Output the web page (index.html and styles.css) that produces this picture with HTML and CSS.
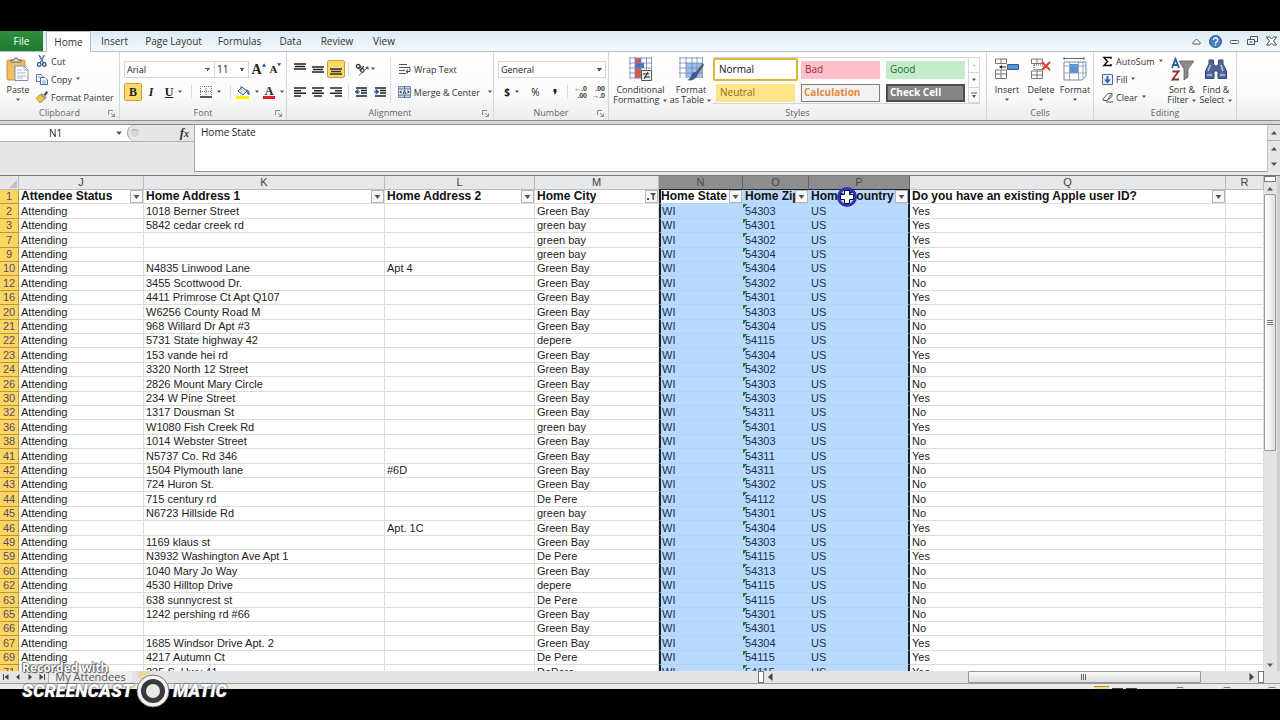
FILE: index.html
```html
<!DOCTYPE html>
<html lang="en">
<head>
<meta charset="utf-8">
<title>My Attendees</title>
<link rel="stylesheet" href="styles.css">
</head>
<body>
<svg class="defs" aria-hidden="true">
  <symbol id="caret" viewBox="0 0 6 4"><path d="M1 .5h4L3 3z" fill="#555"/></symbol>
  <symbol id="launch" viewBox="0 0 7 7"><path d="M.5 5V.5H5M3 3l3 3M6.500 3.500v3h-3" fill="none" stroke="#8b8b8b"/></symbol>
  <symbol id="al" viewBox="0 0 12 10"><path d="M0 1h12M0 3.700h7M0 6.300h12M0 9h7" stroke="#222" stroke-width="1.400"/></symbol>
  <symbol id="ac" viewBox="0 0 12 10"><path d="M0 1h12M2 3.700h8M0 6.300h12M2 9h8" stroke="#222" stroke-width="1.400"/></symbol>
  <symbol id="ar" viewBox="0 0 12 10"><path d="M0 1h12M5 3.700h7M0 6.300h12M5 9h7" stroke="#222" stroke-width="1.400"/></symbol>
  <symbol id="vt" viewBox="0 0 12 12"><path d="M0 1h12M1 3.500h10M0 6h12" stroke="#222" stroke-width="1.400"/></symbol>
  <symbol id="vm" viewBox="0 0 12 12"><path d="M0 4h12M1 6.500h10M0 9h12" stroke="#222" stroke-width="1.400"/></symbol>
  <symbol id="vb" viewBox="0 0 12 12"><path d="M0 6h12M1 8.500h10M0 11h12" stroke="#333" stroke-width="1.400"/></symbol>
  <symbol id="up" viewBox="0 0 8 5"><path d="M1 4.500h6L4 1z" fill="#555"/></symbol>
  <symbol id="down" viewBox="0 0 8 5"><path d="M1 .5h6L4 4z" fill="#555"/></symbol>
</svg>

<div class="window">
  <nav class="tabs" aria-label="Ribbon tabs">
    <button class="tab file">File</button>
    <button class="tab active">Home</button>
    <button class="tab t-insert">Insert</button>
    <button class="tab t-page">Page Layout</button>
    <button class="tab t-form">Formulas</button>
    <button class="tab t-data">Data</button>
    <button class="tab t-rev">Review</button>
    <button class="tab t-view">View</button>
    <div class="win-controls">
      <button aria-label="Minimize ribbon"><svg width="9" height="9" viewBox="0 0 9 9"><path d="M1 5.500 4.500 2 8 5.500v1.500H1z" fill="#fff" stroke="#555"/></svg></button>
      <button aria-label="Help"><svg width="13" height="13" viewBox="0 0 13 13"><circle cx="6.500" cy="6.500" r="6" fill="#4a7fc4" stroke="#2a5591"/><path d="M4.300 5a2.200 2.200 0 1 1 3.300 1.900c-.8.5-1.100.7-1.100 1.500M6.500 9.600v1.200" fill="none" stroke="#fff" stroke-width="1.300"/></svg></button>
      <button aria-label="Minimize"><svg width="9" height="9" viewBox="0 0 9 9"><rect x=".5" y="3.500" width="8" height="3" rx="1" fill="#fff" stroke="#555"/></svg></button>
      <button aria-label="Restore"><svg width="11" height="10" viewBox="0 0 11 10"><path d="M3.500 3V.5h7v5H8M.5 3.500h7v5h-7zM2.500 6h3" fill="none" stroke="#555"/></svg></button>
      <button aria-label="Close"><svg width="11" height="10" viewBox="0 0 11 10"><path d="M.5 1h3l2 2 2-2h3l-3 4 3 4h-3l-2-2-2 2h-3l3-4z" fill="#fff" stroke="#444"/></svg></button>
    </div>
  </nav>

  <div class="ribbon">
    <section class="group g-clip">
      <div class="body">
        <button class="big paste"><svg width="24" height="24" viewBox="0 0 24 24"><rect x="1" y="3" width="18" height="20" rx="1.500" fill="#eebf63" stroke="#c8923b"/><path d="M5 5V3h3q0-2 2-2t2 2h3v2z" fill="#ddd" stroke="#666"/><path d="M9 9h9l4 4v10.500H9z" fill="#fff" stroke="#7b8db0"/><path d="M18 9v4h4M11 13h5M11 16h9M11 19h9M11 21h6" fill="none" stroke="#9fb0cc"/></svg><span>Paste</span><svg class="caret"><use href="#caret"/></svg></button>
        <div class="stack">
          <button class="row"><svg width="12" height="12" viewBox="0 0 12 12"><path d="M3 0 7.500 8M8.500 0 4 8" stroke="#4a6fa8" stroke-width="1.400"/><circle cx="3.200" cy="9.500" r="1.800" fill="none" stroke="#24508f" stroke-width="1.300"/><circle cx="8.300" cy="9.500" r="1.800" fill="none" stroke="#24508f" stroke-width="1.300"/></svg>Cut</button>
          <button class="row"><svg width="12" height="12" viewBox="0 0 12 12"><path d="M.5 1.500H5L7 3.500v5H.5z" fill="#f4f7fc" stroke="#5977a8"/><path d="M4.500 4.500H9L11.500 7v4.500h-7z" fill="#fff" stroke="#4468a3"/><path d="M6 8h4M6 10h4M2 4h2" stroke="#6f9ad6"/></svg>Copy <svg class="caret"><use href="#caret"/></svg></button>
          <button class="row"><svg width="12" height="12" viewBox="0 0 12 12"><path d="m8 3 2.500-3L12 1.500 9.500 5z" fill="#444"/><path d="M5 3h2l3 3-.5 1.500z" fill="#c0c7d6" stroke="#555" stroke-width=".6"/><path d="m4.500 3.500 4.500 4.500-5 4-4-5z" fill="#f1c54b" stroke="#9b7a22" stroke-width=".7"/></svg>Format Painter</button>
        </div>
      </div>
      <div class="label">Clipboard<svg class="launch"><use href="#launch"/></svg></div>
    </section>

    <section class="group g-font">
      <div class="body lines">
        <div class="line">
          <select class="sel s-font" aria-label="Font"><option>Arial</option></select>
          <select class="sel s-size" aria-label="Font size"><option>11</option></select>
          <button class="ico w20" aria-label="Grow font"><span class="grow">A</span><svg class="mini" viewBox="0 0 6 4"><path d="M0 4h5L2.500 0z" fill="#24508f"/></svg></button>
          <button class="ico w14" aria-label="Shrink font"><span class="shrink">A</span><svg class="mini" viewBox="0 0 6 4"><path d="M0 0h5L2.500 3.500z" fill="#24508f"/></svg></button>
        </div>
        <div class="line">
          <button class="ico w18 on"><b class="serif">B</b></button>
          <button class="ico w18"><i class="serif">I</i></button>
          <button class="ico w28"><u class="serif">U</u><svg class="caret c-gap"><use href="#caret"/></svg></button>
          <span class="vsep"></span>
          <button class="ico w32" aria-label="Borders"><svg width="12" height="12" viewBox="0 0 12 12"><path d="M.5 0v10M6 0v10M11.500 0v10M0 .5h12M0 5.500h12" stroke="#777" stroke-dasharray="1 1"/><path d="M0 11h12" stroke="#222" stroke-width="1.500"/></svg><svg class="caret c-gap"><use href="#caret"/></svg></button>
          <span class="vsep"></span>
          <button class="ico w28" aria-label="Fill colour"><svg width="14" height="13" viewBox="0 0 14 13"><path d="m2 5 4-4 5 4-4 4z" fill="#dce6f4" stroke="#555"/><path d="M5 4V0M10 4q4 0 3 5-2-1-2-4" fill="#4a77b8" stroke="#4a77b8"/><path d="M0 10h13v3H0z" fill="#fff200"/></svg><svg class="caret c-gap"><use href="#caret"/></svg></button>
          <button class="ico w24" aria-label="Font colour"><span class="fc">A</span><svg class="caret c-gap"><use href="#caret"/></svg></button>
        </div>
      </div>
      <div class="label">Font<svg class="launch"><use href="#launch"/></svg></div>
    </section>

    <section class="group g-align">
      <div class="body lines">
        <div class="line">
          <button class="ico w18" aria-label="Top align"><svg width="12" height="12"><use href="#vt"/></svg></button>
          <button class="ico w18" aria-label="Middle align"><svg width="12" height="12"><use href="#vm"/></svg></button>
          <button class="ico w18 on" aria-label="Bottom align"><svg width="12" height="12"><use href="#vb"/></svg></button>
          <span class="vsep"></span>
          <button class="ico w38 orient" aria-label="Orientation"><svg width="14" height="13" viewBox="0 0 14 13"><g transform="rotate(45 5 5)" fill="none" stroke="#333" stroke-width="1.200"><circle cx="2.500" cy="5" r="1.800"/><path d="M4.500 3v4M6.500 1v6"/><circle cx="8.300" cy="5" r="1.800"/></g><path d="M4 12.500 12 5" stroke="#666"/><path d="M13.500 3.500v3.500l-3.500-3z" fill="#555"/></svg><svg class="caret"><use href="#caret"/></svg></button>
          <span class="vsep wide"></span>
          <button class="row"><svg width="13" height="12" viewBox="0 0 13 12"><path d="M1 1.500h8M1 4.500h11v4H9M1 7.500h6M1 10.500h7" fill="none" stroke="#555"/><path d="m10 6-2.500 2.500L10 11z" fill="#3768ad"/></svg>Wrap Text</button>
        </div>
        <div class="line">
          <button class="ico w18" aria-label="Align left"><svg width="12" height="10"><use href="#al"/></svg></button>
          <button class="ico w18" aria-label="Center"><svg width="12" height="10"><use href="#ac"/></svg></button>
          <button class="ico w18" aria-label="Align right"><svg width="12" height="10"><use href="#ar"/></svg></button>
          <span class="vsep"></span>
          <button class="ico w19" aria-label="Decrease indent"><svg width="12" height="11" viewBox="0 0 12 11"><path d="M1 1h11M6 3.500h6M6 6h6M1 9h11" stroke="#222" stroke-width="1.400"/><path d="M0 4.800 3 2.500V7zM2 4.800h3" fill="#35599a" stroke="#35599a"/></svg></button>
          <button class="ico w19" aria-label="Increase indent"><svg width="12" height="11" viewBox="0 0 12 11"><path d="M1 1h11M6 3.500h6M6 6h6M1 9h11" stroke="#222" stroke-width="1.400"/><path d="M5 4.800 2 2.500V7zM0 4.800h3" fill="#35599a" stroke="#35599a"/></svg></button>
          <span class="vsep wide"></span>
          <button class="row"><svg width="13" height="12" viewBox="0 0 13 12"><path d="M.5.5h12v11H.5z" fill="#c9d8ee" stroke="#7083a5"/><path d="M1 3h11v6H1z" fill="#fff"/><path d="M.5 3h12M.5 9h12M6.500 0v3M6.500 9v3" stroke="#536a92"/><path d="m1 6 2.500-2v4zM12 6 9.500 4v4z" fill="#24508f"/><path d="m5 8 1.500-4L8 8M5.500 7h2" fill="none" stroke="#222" stroke-width=".8"/></svg>Merge &amp; Center <svg class="caret c-gap"><use href="#caret"/></svg></button>
        </div>
      </div>
      <div class="label">Alignment<svg class="launch"><use href="#launch"/></svg></div>
    </section>

    <section class="group g-num">
      <div class="body lines">
        <div class="line"><select class="sel s-num" aria-label="Number format"><option>General</option></select></div>
        <div class="line">
          <button class="ico w28 sym"><b>$</b><svg class="caret c-gap"><use href="#caret"/></svg></button>
          <button class="ico w19 sym">%</button>
          <button class="ico w19" aria-label="Comma style"><svg width="4" height="6" viewBox="0 0 4 6"><path d="M.5 0h3v3Q3 5 1 6q1-2 0-3H.5z" fill="#222"/></svg></button>
          <span class="vsep"></span>
          <button class="ico w19 dec"><span>←.0</span><span>.00</span></button>
          <button class="ico w18 dec"><span>.00</span><span>→.0</span></button>
        </div>
      </div>
      <div class="label">Number<svg class="launch"><use href="#launch"/></svg></div>
    </section>

    <section class="group g-styles">
      <div class="body">
        <button class="big cond"><svg width="24" height="24" viewBox="0 0 24 24"><path d="M1 1h21v19H1z" fill="#fff"/><path d="M6 1h6v5H6zM6 16h6v5H6z" fill="#e2544b"/><path d="M6 6h9v5H6z" fill="#3e74c0"/><path d="M6 11h6v5H6z" fill="#e2544b"/><path d="M0 1h23M0 6h23M0 11h23M0 16h23M0 21h18M1 0v21M6 0v21M12 0v21M17.500 0v21M22.500 0v21" stroke="#6d86b0" stroke-width=".8"/><path d="M12.500 13.500h10v10h-10z" fill="#eee" stroke="#555"/><path d="M14 17h6M15 20h6M15 22l4-7" stroke="#222"/></svg><span>Conditional</span><span>Formatting <svg class="caret"><use href="#caret"/></svg></span></button>
        <button class="big fmt"><svg width="25" height="24" viewBox="0 0 25 24"><path d="M1 1h22v19H1z" fill="#fff"/><path d="M7 6h16v15H7z" fill="#9dbcf0"/><path d="M0 1h24M0 6h24M0 11h24M0 16h24M1 0v21M7 0v21M13 0v21M18 0v21M23.500 0v21" stroke="#7189b5" stroke-width=".8"/><path d="m24 6-7 9 2 2 6-9z" fill="#555"/><path d="M17 15q-4 0-5 4-1 3-4 4 8 2 11-6z" fill="#445a86"/></svg><span>Format</span><span>as Table <svg class="caret"><use href="#caret"/></svg></span></button>
        <div class="gallery">
          <button class="st normal">Normal</button><button class="st bad">Bad</button><button class="st good">Good</button>
          <button class="st neutral">Neutral</button><button class="st calc">Calculation</button><button class="st check">Check Cell</button>
        </div>
        <div class="gscroll">
          <button aria-label="Scroll up"><svg width="6" height="4" viewBox="0 0 6 4"><path d="M1 3h4L3 1z" fill="#ccc"/></svg></button>
          <button aria-label="Scroll down"><svg class="caret"><use href="#caret"/></svg></button>
          <button aria-label="More styles"><svg width="6" height="7" viewBox="0 0 6 7"><path d="M0 1h6" stroke="#555"/><path d="M1 3h4L3 6z" fill="#555"/></svg></button>
        </div>
      </div>
      <div class="label">Styles</div>
    </section>

    <section class="group g-cells">
      <div class="body">
        <button class="big c34"><svg width="24" height="24" viewBox="0 0 24 24"><path d="M.5 2h11v4.500H.5zM.5 13h11v8.500H.5zM6 2v4.500M6 13v8.500M.5 17h11" fill="#fff" stroke="#777"/><path d="M12.500 7.500h11v5h-11z" fill="#5b8fd6" stroke="#2f5d9e"/><path d="M11 10H5" stroke="#222"/><path d="M4 10l3-2v4z" fill="#222"/></svg><span>Insert</span><svg class="caret"><use href="#caret"/></svg></button>
        <button class="big c34"><svg width="22" height="24" viewBox="0 0 22 24"><path d="M1.500 2h11v4.500h-11zM1.500 14h11v7.500h-11zM7 2v4.500M7 14v7.500M1.500 18h11" fill="#fff" stroke="#777"/><path d="M4 8h9v4.500H4z" fill="#fff" stroke="#444" stroke-dasharray="1 1"/><path d="m12 5 8 8M20 5l-8 8" stroke="#e0402f" stroke-width="2"/></svg><span>Delete</span><svg class="caret"><use href="#caret"/></svg></button>
        <button class="big c34"><svg width="24" height="24" viewBox="0 0 24 24"><path d="M1 1.500h20M1 0v3M21 0v3" stroke="#666"/><path d="M1 5h22v14.500L19 23H1z" fill="#fff" stroke="#7b8aa6"/><path d="M7 7h8v9H7z" fill="#5b8fd6"/><path d="M1 9h22M1 16h22M6.500 5v18M15.500 5v18M20 5v16" stroke="#8d9bb8" stroke-width=".9"/></svg><span>Format</span><svg class="caret"><use href="#caret"/></svg></button>
      </div>
      <div class="label">Cells</div>
    </section>

    <section class="group g-edit">
      <div class="body">
        <div class="stack">
          <button class="row"><svg width="11" height="11" viewBox="0 0 11 11"><path d="M9 3V1.500H2L5.500 5.500 2 9.500h7V8" fill="none" stroke="#111" stroke-width="1.500"/></svg>AutoSum <svg class="caret"><use href="#caret"/></svg></button>
          <button class="row"><svg width="11" height="11" viewBox="0 0 11 11"><path d="M.5.5h10v10H.5z" fill="#e8f0fb" stroke="#466da8"/><path d="M4.500 2h2v3.500h2.500l-3.500 4-3.500-4h2.500z" fill="#2f67b8"/></svg>Fill <svg class="caret"><use href="#caret"/></svg></button>
          <button class="row"><svg width="11" height="11" viewBox="0 0 11 11"><path d="m1 7 5-5.500h4L5 8.500H1zM5 8.500l5-4v-3" fill="#f7f7fa" stroke="#666"/><path d="M4 10h7" stroke="#555"/></svg>Clear <svg class="caret"><use href="#caret"/></svg></button>
        </div>
        <button class="big c34"><svg width="24" height="24" viewBox="0 0 24 24"><path d="M9 4h15l-6 8v8l-4 3V12z" fill="#8b8b8b" stroke="#555" stroke-width=".7"/><path d="M2 11 5.500 2 9 11M3.200 8h4.600" fill="none" stroke="#2d5b9c" stroke-width="1.800"/><path d="M2.500 14.500h6l-6 8h6.500" fill="none" stroke="#8e3328" stroke-width="1.800"/></svg><span>Sort &amp;</span><span>Filter <svg class="caret"><use href="#caret"/></svg></span></button>
        <button class="big c34"><svg width="24" height="24" viewBox="0 0 24 24"><path d="M5 3h4.500v4L11 9h2l1.500-2V3H19v4l3.500 7v7.500h-8.500V14h-4v7.500H1.500V14L5 7z" fill="#4c6795" stroke="#33486e"/><path d="M4 14 6.500 8M17 8l2 6M3 18h5M16 18h5" stroke="#b9c9e4" stroke-width="1.500"/></svg><span>Find &amp;</span><span>Select <svg class="caret"><use href="#caret"/></svg></span></button>
      </div>
      <div class="label">Editing</div>
    </section>
  </div>

  <div class="formula">
    <div class="name-side">
      <div class="name-row">
        <input class="name-box" aria-label="Name box" value="N1">
        <button class="name-drop" aria-label="Name list"><svg width="8" height="5"><use href="#down"/></svg></button>
        <div class="fx-zone"><span class="knob"></span><button class="fx" aria-label="Insert function"><i>f</i><i class="x">x</i></button></div>
      </div>
    </div>
    <textarea class="fx-input" aria-label="Formula bar">Home State</textarea>
    <div class="fx-scroll">
      <button class="collapse" aria-label="Collapse formula bar"><svg width="8" height="5"><use href="#up"/></svg></button>
      <button aria-label="Up"><svg width="8" height="5"><use href="#up"/></svg></button>
      <button aria-label="Down"><svg width="8" height="5"><use href="#down"/></svg></button>
    </div>
  </div>

  <div class="sheet">
    <div class="grid">
      <table>
        <colgroup><col class="c-n"><col class="c-j"><col class="c-k"><col class="c-l"><col class="c-m"><col class="c-state"><col class="c-o"><col class="c-p"><col class="c-q"><col></colgroup>
        <thead>
          <tr class="letters"><th class="corner"><svg width="8" height="8" viewBox="0 0 8 8"><path d="M8 0v8H0z" fill="#c3c3c3"/></svg></th><th>J</th><th>K</th><th>L</th><th>M</th><th class="hl">N</th><th class="hl">O</th><th class="hl">P</th><th>Q</th><th>R</th></tr>
        </thead>
        <tbody id="rows"></tbody>
      </table>
    </div>
    <div class="vscroll">
      <span class="split"></span>
      <button aria-label="Scroll up"><svg width="8" height="5"><use href="#up"/></svg></button>
      <span class="vthumb"><svg width="6" height="6" viewBox="0 0 6 6"><path d="M0 .5h6M0 2.500h6M0 4.500h6" stroke="#777"/></svg></span>
      <button class="v-down" aria-label="Scroll down"><svg width="8" height="5"><use href="#down"/></svg></button>
    </div>
  </div>

  <div class="bottom">
    <div class="nav-arrows">
      <button aria-label="First sheet"><svg width="6" height="6" viewBox="0 0 6 6"><path d="M.5 0v6" stroke="#444"/><path d="M5.500 0v6L1.500 3z" fill="#444"/></svg></button>
      <button aria-label="Previous sheet"><svg width="6" height="6" viewBox="0 0 6 6"><path d="M4.500 0v6L1 3z" fill="#444"/></svg></button>
      <button aria-label="Next sheet"><svg width="6" height="6" viewBox="0 0 6 6"><path d="M1.500 0v6L5 3z" fill="#444"/></svg></button>
      <button aria-label="Last sheet"><svg width="6" height="6" viewBox="0 0 6 6"><path d="M5.500 0v6" stroke="#444"/><path d="M.5 0v6l4-3z" fill="#444"/></svg></button>
    </div>
    <button class="sheet-tab">My Attendees</button>
    <span class="new-tab"></span>
    <div class="hscroll">
      <span class="hsplit"></span>
      <button aria-label="Scroll left"><svg width="5" height="8" viewBox="0 0 5 8"><path d="M4.500 0v8L0 4z" fill="#444"/></svg></button>
      <div class="htrack"><span class="hthumb"><svg width="6" height="6" viewBox="0 0 6 6"><path d="M.5 0v6M2.500 0v6M4.500 0v6" stroke="#666"/></svg></span></div>
      <button aria-label="Scroll right"><svg width="5" height="8" viewBox="0 0 5 8"><path d="M.5 0v8L5 4z" fill="#444"/></svg></button>
      <span class="hsplit"></span>
    </div>
  </div>
  <div class="status"><span class="view-on"></span><span class="view"></span><span class="view"></span><span class="zoom-out"></span><span class="zoom-knob"></span><span class="zoom-in"></span></div>

  <div class="watermark">
    <div class="rec">Recorded with</div>
    <div class="brand"><span>SCREENCAST</span><svg width="34" height="34" viewBox="0 0 34 34"><circle cx="17" cy="17" r="16" fill="#f4f4f4" stroke="#777"/><circle cx="17" cy="17" r="9.500" fill="#e8e8e8" stroke="#3a3a3a" stroke-width="5"/></svg><span>MATIC</span></div>
  </div>
</div>
<script src="script.js"></script>
</body>
</html>
```
FILE: styles.css
```css
* { box-sizing: border-box; }
body { margin: 0; background: #000; font: 9px/11px "Open Sans", "Noto Sans", sans-serif; color: #333; }
button, input, select, textarea { font: inherit; color: inherit; border: 0; background: none; padding: 0; margin: 0; border-radius: 0; outline: 0; }
svg { display: block; flex: none; }
.defs { position: absolute; width: 0; height: 0; }
.window { height: 100vh; display: flex; flex-direction: column; padding: 31px 0; position: relative; }

.tabs { display: flex; height: 21px; flex: none; background: linear-gradient(#dce9f3, #f4f9fc); border-bottom: 1px solid #b9bfc6; }
.tab { flex: none; font-size: 10px; text-align: center; white-space: nowrap; }
.file { width: 43px; background: linear-gradient(#2f8f3d, #1f7a2e); color: #fff; margin-right: 3px; }
.active { width: 45px; background: #fff; border: 1px solid #b9bfc6; border-bottom: 0; height: 21px; }
.t-insert { width: 47px; }
.t-page { width: 71px; }
.t-form { width: 61px; }
.t-data { width: 41px; }
.t-rev { width: 52px; }
.t-view { width: 42px; }
.win-controls { margin-left: auto; display: flex; align-items: center; gap: 8px; padding-right: 3px; }

.ribbon { display: flex; height: 69px; flex: none; background: linear-gradient(#fff, #fbfbfb 60%, #ebedee); border-bottom: 1px solid #8a8a8a; overflow: hidden; }
.group { flex: none; display: flex; flex-direction: column; border-right: 1px solid #d5d8db; }
.body { flex: 1; display: flex; }
.label { display: flex; justify-content: center; position: relative; height: 13px; color: #666; }
.launch { position: absolute; right: 4px; top: 3px; width: 7px; height: 7px; }
.g-clip { width: 120px; }
.g-font { width: 167px; }
.g-align { width: 207px; }
.g-num { width: 115px; }
.g-styles { width: 378px; }
.g-cells { width: 107px; }
.g-edit { width: 143px; }
.caret { width: 6px; height: 4px; display: inline-block; vertical-align: middle; }
.c-gap { margin-left: 4px; }
.big { display: flex; flex-direction: column; align-items: center; padding-top: 5px; white-space: nowrap; line-height: 10px; }
.big > svg:first-child { margin-bottom: 4px; }
.big > .caret { margin-top: 3px; }
.paste { width: 36px; }
.c34 { width: 34px; }
.stack { display: flex; flex-direction: column; }
.stack .row { height: 18px; }
.row { display: flex; align-items: center; gap: 3px; white-space: nowrap; }
.lines { flex-direction: column; padding: 6px 0 0 4px; gap: 1px; }
.line { display: flex; align-items: center; height: 22px; }
.sel { appearance: none; height: 17px; border: 1px solid #d2d6da; padding: 0 2px; color: #222; background: conic-gradient(from -45deg at 50% 100%, #555 90deg, transparent 0) right 3px center / 5px 3px no-repeat, #fff; background: linear-gradient(45deg, transparent 50%, #555 50%) right 6px center / 3px 3px no-repeat, linear-gradient(-45deg, transparent 50%, #555 50%) right 3px center / 3px 3px no-repeat, #fff; }
.s-font { width: 91px; }
.s-size { width: 34px; border-left: 0; font-size: 10px; }
.s-num { width: 108px; }
.ico { height: 18px; display: flex; align-items: center; justify-content: center; flex: none; }
.on { background: #fbd869; border: 1px solid #c9a13b; border-radius: 2px; }
.w14 { width: 14px; } .w18 { width: 18px; } .w19 { width: 19px; } .w20 { width: 20px; } .w24 { width: 24px; } .w28 { width: 28px; } .w32 { width: 32px; } .w38 { width: 38px; }
.orient { justify-content: flex-start; padding-left: 3px; gap: 1px; }
.sym { font-size: 10px; color: #222; }
.vsep { width: 1px; height: 14px; background: #d9dcdf; margin: 0 3px; }
.vsep.wide { height: 22px; margin: 0 7px 0 0; }
.serif, .grow, .shrink, .fc { font-family: "Liberation Serif", serif; font-weight: bold; color: #222; }
.serif { font-size: 12px; }
.grow { font-size: 14px; }
.shrink { font-size: 11px; }
.mini { width: 5px; height: 4px; align-self: flex-start; margin-top: 3px; }
.fc { font-size: 12px; line-height: 10px; border-bottom: 3px solid #e0202a; padding: 0 2px; }
.dec { flex-direction: column; font: bold 7px/7px "Liberation Sans", sans-serif; align-items: flex-end; padding-right: 3px; }
.cond { width: 63px; }
.fmt { width: 38px; }
.gallery { display: grid; grid-template-columns: 85px 85px 85px; grid-template-rows: 23px 23px; margin: 5px 0 0 3px; height: 47px; border-top: 1px solid #d5d8db; border-bottom: 1px solid #d5d8db; align-items: center; flex: none; }
.st { font-size: 10px; text-align: left; height: 18px; padding: 0 4px; margin: 0 3px 0 3px; white-space: nowrap; }
.normal { background: #fff; color: #111; border: 2px solid #dcb934; border-radius: 2px; height: 23px; margin: 0; }
.bad { background: #ffc0cb; color: #9c2b35; }
.good { background: #c4ebcb; color: #286a35; }
.neutral { background: #fde58b; color: #91691c; }
.calc { background: #f2f2f2; color: #e38a3c; border: 1px solid #7f7f7f; font-weight: bold; padding: 0 2px; }
.check { background: #848484; color: #fff; border: 2px solid #4d4d4d; font-weight: bold; padding: 0 2px; }
.gscroll { display: flex; flex-direction: column; margin-top: 5px; height: 47px; width: 12px; border: 1px solid #d5d8db; }
.gscroll button { flex: 1; display: flex; align-items: center; justify-content: center; border-bottom: 1px solid #d5d8db; }
.g-cells .body { padding-left: 3px; }
.g-edit .body { padding-left: 8px; }
.g-edit .stack { width: 63px; }

.formula { display: flex; height: 54px; flex: none; border-top: 3px solid #d4d6d8; background: #e6e6e6; border-bottom: 3px solid #e9e9e9; }
.name-side { width: 195px; flex: none; border-right: 1px solid #a8a8a8; border-top: 1px solid #8a8a8a; }
.name-row { display: flex; height: 17px; border-bottom: 1px solid #b3b3b3; background: #fff; }
.name-box { width: 111px; text-align: center; font-size: 10px; color: #222; }
.name-drop { width: 16px; display: flex; align-items: center; justify-content: center; }
.fx-zone { flex: 1; display: flex; align-items: center; justify-content: space-between; background: #e6e6e6; border-left: 1px solid #999; border-radius: 9px 0 0 9px; padding: 0 5px 0 3px; }
.knob { width: 8px; height: 8px; border-radius: 50%; background: #d8d8d8; border-top: 1px solid #aaa; }
.fx { font: bold 13px/15px "Liberation Serif", serif; color: #333; }
.fx .x { font-size: 10px; }
.fx-input { flex: 1; resize: none; background: #fff; border-top: 1px solid #8a8a8a; border-bottom: 1px solid #999; font-size: 10px; line-height: 14px; color: #222; padding: 0 6px; overflow: hidden; }
.fx-scroll { width: 13px; display: flex; flex-direction: column; border-top: 1px solid #8a8a8a; border-left: 1px solid #c4c4c4; }
.fx-scroll button { flex: 1; display: flex; align-items: center; justify-content: center; }
.fx-scroll .collapse { border-bottom: 1px solid #b3b3b3; }

.sheet { flex: 1; display: flex; min-height: 0; background: #e3e3e3; border-top: 1px solid #777; }
.grid { flex: 1; overflow: hidden; background: #fff; }
table { width: 100%; border-collapse: separate; border-spacing: 0; table-layout: fixed; font: 11px/13px "Liberation Sans", Arial, sans-serif; color: #1c1c1c; }
.c-n { width: 19px; } .c-j { width: 125px; } .c-k { width: 241px; } .c-l { width: 150px; } .c-m { width: 124px; } .c-state { width: 84px; } .c-o { width: 66px; } .c-p { width: 101px; } .c-q { width: 316px; }
th, td { padding: 0 0 0 2px; text-align: left; white-space: nowrap; overflow: hidden; border-right: 1px solid #dadcdd; border-bottom: 1px solid #dadcdd; height: 14px; }
tbody tr:nth-child(5n+2) > *, tbody tr:nth-child(5n+4) > * { height: 15px; }
.letters th { background: #e6e7e8; font-weight: normal; text-align: center; padding: 0; color: #444; border-color: #bcbcbc; }
.letters .corner { background: #e6e6e6; }
.corner svg { margin: 2px 0 0 9px; }
.letters .hl { background: #8d8d8d; color: #4a4a4a; border-right-color: #666; border-bottom-color: #222; }
tbody .num { background: #fdd660; color: #5b4a6c; text-align: center; padding: 0; font-weight: normal; border-color: #b99642; }
.sel-cell { background: #b9d9fd; color: #15304f; border-right-color: #b9d9fd; border-bottom-color: #b1d2f8; }
.first { border-left: 2px solid #16212c; padding-left: 1px; }
.last { border-right: 2px solid #16212c; }
.zip { background-image: linear-gradient(135deg, #22773a 3px, transparent 3px); }
.titles th { font-size: 12px; color: #111; font-weight: bold; overflow: visible; }
.titles .num { font-size: 11px; font-weight: normal; color: #5b4a6c; }
.titles .active-cell { background: #fff; }
.titles .first { padding-left: 0; }
.hd { display: flex; justify-content: space-between; position: relative; height: 13px; }
.hd span { overflow: hidden; }
.hd button { width: 13px; height: 13px; flex: none; border: 1px solid #b5b5b5; background: #f7f7f7; display: flex; align-items: center; justify-content: center; }
.cursor { position: absolute; left: 25px; top: -4px; }
.vscroll { width: 16px; flex: none; display: flex; flex-direction: column; align-items: flex-start; border-right: 3px solid #d0d0d0; }
.vscroll button { width: 12px; height: 12px; display: flex; align-items: center; justify-content: center; }
.split { width: 12px; height: 6px; border: 1px solid #777; background: #fff; }
.vthumb { width: 12px; height: 52%; border: 1px solid #999; border-radius: 1px; background: linear-gradient(90deg, #fff, #dedede); display: flex; align-items: center; justify-content: center; }
.vscroll .v-down { margin-top: auto; }

.bottom { height: 13px; flex: none; display: flex; background: #e3e4e5; border-bottom: 1px solid #999; }
.nav-arrows { display: flex; width: 48px; justify-content: space-around; align-items: center; flex: none; }
.sheet-tab { width: 84px; background: #eceded; font-size: 11px; line-height: 12px; color: #555; border-left: 1px solid #aaa; white-space: nowrap; }
.new-tab { width: 12px; height: 8px; border-radius: 0 0 4px 4px; background: #e9d7a6; margin-left: 6px; }
.hscroll { margin-left: auto; display: flex; align-items: center; width: 522px; gap: 4px; padding-right: 16px; }
.hsplit { width: 6px; height: 12px; border: 1px solid #777; background: #fff; flex: none; }
.htrack { flex: 1; display: flex; justify-content: flex-end; padding-right: 44px; }
.hthumb { width: 55%; height: 12px; border: 1px solid #999; border-radius: 1px; background: linear-gradient(#fbfbfb, #dcdcdc); display: flex; align-items: center; justify-content: center; }
.status { height: 5px; flex: none; background: #e9eaea; display: flex; align-items: flex-end; justify-content: flex-end; gap: 3px; padding-right: 4px; }
.view-on { width: 15px; height: 3px; background: #f6dc80; border-top: 1px solid #c08a22; }
.view { width: 11px; height: 1px; background: #444; }
.zoom-out, .zoom-knob, .zoom-in { width: 8px; height: 2px; border-radius: 3px 3px 0 0; border-top: 1px solid #777; }
.zoom-out { margin-left: 36px; }
.zoom-knob { margin-left: 36px; }
.zoom-in { margin-left: 34px; }

.watermark { position: absolute; left: 22px; bottom: 12px; color: #fff; }
.rec { font: bold 12px/12px "Open Sans", sans-serif; text-shadow: 0 0 1px #555, 0 0 1px #555, 1px 1px 1px #555, -1px -1px 1px #888; }
.brand { display: flex; align-items: center; gap: 3px; font: italic 900 18px/34px Roboto, "Liberation Sans", sans-serif; text-shadow: 0 0 1px #444, 0 0 2px #555; }
```
FILE: script.js
```js
const rows = [
  [2, "1018 Berner Street", "", "Green Bay", 54303, "Yes"],
  [3, "5842 cedar creek rd", "", "green bay", 54301, "Yes"],
  [7, "", "", "green bay", 54302, "Yes"],
  [9, "", "", "green bay", 54304, "Yes"],
  [10, "N4835 Linwood Lane", "Apt 4", "Green Bay", 54304, "No"],
  [12, "3455 Scottwood Dr.", "", "Green Bay", 54302, "No"],
  [16, "4411 Primrose Ct Apt Q107", "", "Green Bay", 54301, "Yes"],
  [20, "W6256 County Road M", "", "Green Bay", 54303, "No"],
  [21, "968 Willard Dr Apt #3", "", "Green Bay", 54304, "No"],
  [22, "5731 State highway 42", "", "depere", 54115, "No"],
  [23, "153 vande hei rd", "", "Green Bay", 54304, "Yes"],
  [24, "3320 North 12 Street", "", "Green Bay", 54302, "No"],
  [26, "2826 Mount Mary Circle", "", "Green Bay", 54303, "No"],
  [30, "234 W Pine Street", "", "Green Bay", 54303, "Yes"],
  [32, "1317 Dousman St", "", "Green Bay", 54311, "No"],
  [36, "W1080 Fish Creek Rd", "", "green bay", 54301, "Yes"],
  [38, "1014 Webster Street", "", "Green Bay", 54303, "No"],
  [41, "N5737 Co. Rd 346", "", "Green Bay", 54311, "Yes"],
  [42, "1504 Plymouth lane", "#6D", "Green Bay", 54311, "No"],
  [43, "724 Huron St.", "", "Green Bay", 54302, "No"],
  [44, "715 century rd", "", "De Pere", 54112, "No"],
  [45, "N6723 Hillside Rd", "", "green bay", 54301, "No"],
  [46, "", "Apt. 1C", "Green Bay", 54304, "Yes"],
  [49, "1169 klaus st", "", "Green Bay", 54303, "No"],
  [59, "N3932 Washington Ave Apt 1", "", "De Pere", 54115, "Yes"],
  [60, "1040 Mary Jo Way", "", "Green Bay", 54313, "No"],
  [62, "4530 Hilltop Drive", "", "depere", 54115, "No"],
  [63, "638 sunnycrest st", "", "De Pere", 54115, "No"],
  [65, "1242 pershing rd #66", "", "Green Bay", 54301, "No"],
  [66, "", "", "Green Bay", 54301, "No"],
  [67, "1685 Windsor Drive Apt. 2", "", "Green Bay", 54304, "Yes"],
  [69, "4217 Autumn Ct", "", "De Pere", 54115, "Yes"],
  [71, "235 S. Hwy 41", "", "DePere", 54115, "Yes"]
];
const arrow = '<svg width="7" height="4" viewBox="0 0 7 4"><path d="M.5 0h6l-3 4z" fill="#555"/></svg>';
const funnel = '<svg width="9" height="7" viewBox="0 0 9 7"><path d="M3 0h6L7 3v4H5.500V3zM0 5h2v2H0z" fill="#555"/></svg>';
const cursor = '<svg class="cursor" width="22" height="22" viewBox="0 0 22 22"><circle cx="11" cy="11" r="8.500" fill="none" stroke="#2f2fc4" stroke-width="3"/><path d="M8.500 4.500h5v4h4v5h-4v4h-5v-4h-4v-5h4z" fill="#fff" stroke="#111"/></svg>';
const heads = [
  ["Attendee Status", ""], ["Home Address 1", ""], ["Home Address 2", ""], ["Home City", ""],
  ["Home State", "sel-cell first active-cell"], ["Home Zip", "sel-cell"],
  ["Home Country", "sel-cell last"], ["Do you have an existing Apple user ID?", ""]
];
const title = heads.map(([text, cls]) =>
  `<th class="${cls}"><div class="hd"><span>${text}</span><button aria-label="Filter ${text}">${text === "Home City" ? funnel : arrow}</button>${text === "Home Country" ? cursor : ""}</div></th>`
).join("");
document.getElementById("rows").innerHTML =
  `<tr class="titles"><th class="num">1</th>${title}<th></th></tr>` +
  rows.map(([n, a1, a2, city, zip, apple]) =>
    `<tr><th class="num">${n}</th><td>Attending</td><td>${a1}</td><td>${a2}</td><td>${city}</td>` +
    `<td class="sel-cell first">WI</td><td class="sel-cell zip">${zip}</td><td class="sel-cell last">US</td><td>${apple}</td><td></td></tr>`
  ).join("");
```
